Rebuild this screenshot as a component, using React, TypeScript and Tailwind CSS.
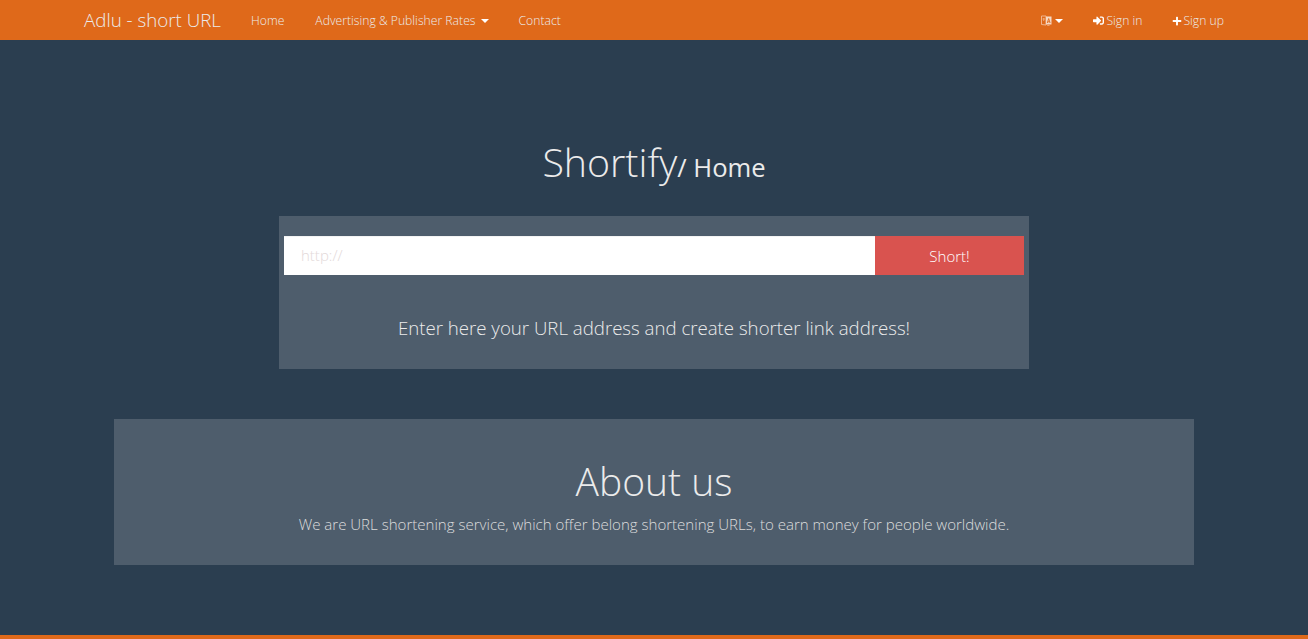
import { FaPlus, FaSignInAlt } from 'react-icons/fa'

const font = { fontFamily: '"Open Sans", sans-serif' }

const Caret = () => (
  <span className="inline-block w-0 h-0 border-x-4 border-t-4 border-x-transparent border-t-white" />
)

// two overlapping pages, the front one carries an "A"
const LangIcon = () => (
  <svg width="11" height="11" viewBox="0 0 11 11" fill="none">
    <path d="M.5 1V9.500L5 10V1z" stroke="#f0b48c" strokeWidth="1" />
    <path d="M1.500 4h2.500M2.700 3v3" stroke="#f0b48c" strokeWidth=".8" />
    <path d="M5 1.500h5.500V9.500H5z" fill="#f6d9c4" />
    <path d="M6.300 8 7.700 3.500 9.100 8M6.800 6.800h1.800" stroke="#df691a" strokeWidth=".9" />
    <path d="M6 10l2 1v-1" stroke="#f0b48c" strokeWidth=".8" />
  </svg>
)

export default function App() {
  return (
    <div className="min-h-screen bg-[#2b3e50] font-light text-white flex flex-col" style={font}>
      {/* navbar */}
      <nav className="h-10 bg-[#df691a] shrink-0">
        <div className="w-[1170px] mx-auto px-[15px] h-full flex items-center text-[12.2px] text-[#ebebeb]">
          <a className="text-[18.75px] mr-[30px]">Adlu - short URL</a>
          <a className="mr-[31px] pt-[2px]">Home</a>
          <a className="mr-[30px] pt-[2px] flex items-center gap-[5px]">
            Advertising &amp; Publisher Rates
            <Caret />
          </a>
          <a className="pt-[2px]">Contact</a>

          <div className="ml-auto flex items-center gap-[30px] pt-[2px]">
            <a className="flex items-center gap-[3px]">
              <LangIcon />
              <Caret />
            </a>
            <a className="flex items-center gap-[2px]">
              <FaSignInAlt className="text-white text-[11px]" /> Sign in
            </a>
            <a className="flex items-center gap-px">
              <FaPlus className="text-white text-[10px]" /> Sign up
            </a>
          </div>
        </div>
      </nav>

      <main className="flex-1 flex flex-col items-center">
        <h1 className="mt-[95px] h-[81px] text-[39.3px] leading-[54px] text-[#ebebeb] text-center">
          Shortify<span className="text-[25.6px] font-normal">/ Home</span>
        </h1>

        {/* form panel */}
        <section className="w-[750px] h-[153px] bg-[#4e5d6c] px-[5px] pt-5">
          <div className="flex h-[39px]">
            <input
              placeholder="http://"
              className="flex-1 bg-white px-[17px] pb-[2px] text-[15px] font-light text-black outline-none border-t border-[#f3f3f3] placeholder:text-[#e3d9d9]"
            />
            <button className="w-[149px] pt-[2px] bg-[#d9534f] text-[15px] text-white">Short!</button>
          </div>
          <p className="mt-[39px] text-[18.65px] leading-[28px] text-center text-[#ebebeb]">
            Enter here your URL address and create shorter link address!
          </p>
        </section>

        {/* about */}
        <section className="w-[1080px] h-[146px] mt-[50px] bg-[#4e5d6c] pt-[34px] text-center">
          <h2 className="text-[39px] leading-[56px] text-[#ebebeb]">About us</h2>
          <p className="mt-[5px] text-[15.05px] leading-[20px] text-[#dcdcdc]">
            We are URL shortening service, which offer belong shortening URLs, to earn money for people worldwide.
          </p>
        </section>
      </main>

      <footer className="h-1 bg-[#df691a] shrink-0" />
    </div>
  )
}
